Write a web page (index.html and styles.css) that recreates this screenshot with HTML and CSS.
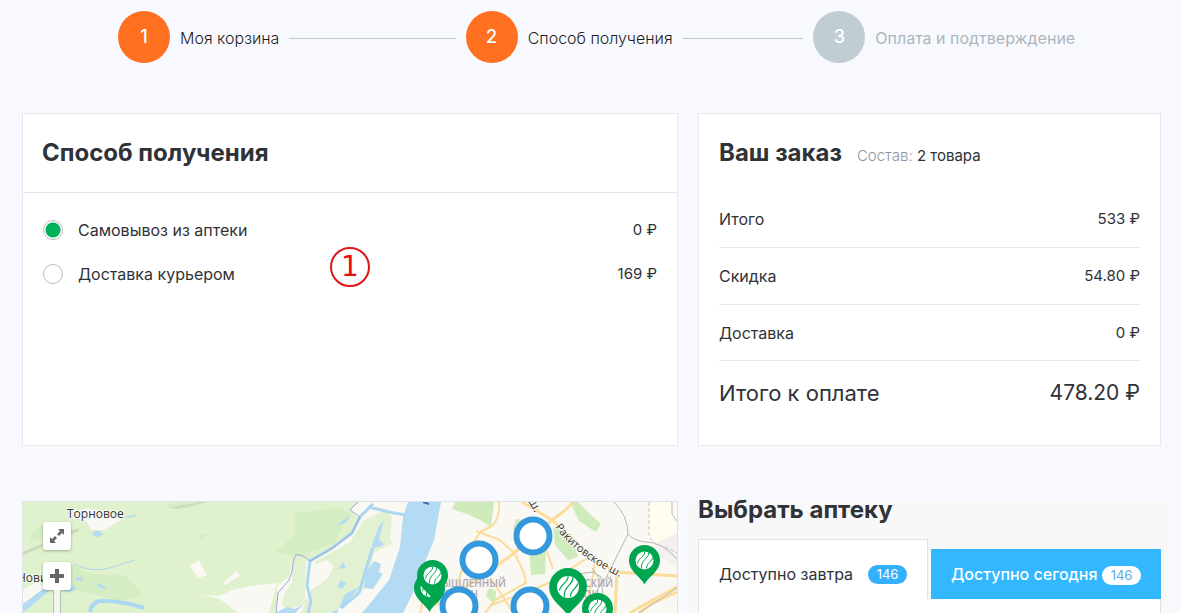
FILE: index.html
```html
<!DOCTYPE html>
<html lang="ru">
<head>
<meta charset="utf-8">
<meta name="viewport" content="width=device-width, initial-scale=1">
<title>Способ получения</title>
<link rel="stylesheet" href="styles.css">
</head>
<body>
<main class="page">
  <ol class="steps">
    <li class="step"><span class="step-num">1</span><span class="step-label">Моя корзина</span><span class="step-line"></span></li>
    <li class="step"><span class="step-num">2</span><span class="step-label">Способ получения</span><span class="step-line"></span></li>
    <li class="step step-next"><span class="step-num">3</span><span class="step-label">Оплата и подтверждение</span></li>
  </ol>

  <div class="columns">
    <section class="card delivery">
      <h2 class="title delivery-title">Способ получения</h2>
      <div class="options">
        <div class="option">
          <input class="radio" type="radio" name="delivery" id="pickup" checked>
          <label class="option-label" for="pickup">Самовывоз из аптеки</label>
          <span class="price">0 ₽</span>
        </div>
        <div class="option">
          <input class="radio" type="radio" name="delivery" id="courier">
          <label class="option-label" for="courier">Доставка курьером</label>
          <span class="price">169 ₽</span>
        </div>
      </div>
      <span class="callout">1</span>
    </section>

    <section class="card order">
      <div class="order-head">
        <h2 class="title">Ваш заказ</h2>
        <p class="order-count"><span class="muted">Состав:</span> 2 товара</p>
      </div>
      <dl class="sums">
        <div class="sum"><dt>Итого</dt><dd class="price">533 ₽</dd></div>
        <div class="sum"><dt>Скидка</dt><dd class="price">54.80 ₽</dd></div>
        <div class="sum"><dt>Доставка</dt><dd class="price">0 ₽</dd></div>
        <div class="sum total"><dt>Итого к оплате</dt><dd class="total-price">478.20 ₽</dd></div>
      </dl>
    </section>
  </div>

  <div class="columns lower">
    <section class="map">
      <svg class="map-canvas" viewBox="23 502 654 111" role="img" aria-label="Карта аптек">
        <defs>
          <g id="leaf">
            <circle r="9" fill="#fff"/>
            <path d="M0-9C1-4-6-3-7 3M4-8C5-2-4-1-3 8M8-3C8 1 2 2 2 8" fill="none" stroke="#00a550" stroke-width="1"/>
          </g>
          <g id="pin">
            <path d="M0 24C-4 16-15.500 11-15.500 0A15.500 15.500 0 0 1 15.500 0C15.500 11 4 16 0 24Z" fill="#00a550"/>
            <use href="#leaf"/>
          </g>
          <path id="rakitovskoe" d="M555 527Q577 558 626 580"/>
        </defs>
        <path fill="#e0f2cd" d="M23 502h654v111H23z"/>
        <g fill="#d5edc2">
          <path d="M295 513l43-5 12 5-15 30-37 13-22-4 18-17zM43 524l-11 9-2 9 22-6zM65 560l25 14 35 1 18 20-24 6-30-8-34-6zM201 535l15-5-18 12zM165 504l42-2-20 7-18-1z"/>
        </g>
        <path fill="#cbd9bc" d="M23 552l55-24 1 3-56 24zM169 508l32-6h7l-31 7z"/>
        <g fill="#faf8f2">
          <path d="M72 513l15-5 28 6 6 6-17 10h-12l-7-10-13-2zM23 590l14-8 12 8-15 10-11 4zM190 566l9-6 8 15-9 3zM224 582l13-11 3 5-9 5-6 4zM202 595l18 1 12-6 18-4 27-3-8 30h-31l-18-14z"/>
          <path d="M292 562l-3 15-12 9 1 8-3 19h402V502H358l-8 8 9 9-8 15-22 18-19 9z"/>
        </g>
        <g fill="#e3f1d3">
          <path d="M293 560l8-3 5 5-1 30 1 11-18 7-6-4 2-12 8-12zM314 562l36-20 13-21 22-11 7 7-2 22 3 4-19 10-8 35-34 25h-31l10-23 16-11 7-13-8-6-10 4z"/>
        </g>
        <g fill="#cfebbb">
          <path d="M455 502h39l-3 25-11-7-13-6-15-5zM570 502h8l12 12 11 10-5 8-17-11zM553 527l18 7 7 23-10 3-13-15zM516 519l14 2-6 22-11-14zM529 551l17-1-1 24-14 1zM489 588l7 3-1 15-9-10z"/>
        </g>
        <path fill="#fefdef" d="M649 502h28v64l-14-8-14-11z"/>
        <path fill="#f4f0f0" d="M651 546l26-13v33l-14-8z"/>
        <g fill="#b3dbf3">
          <path d="M408 502h33l-7 38-11 27-10 26-10 20h-41l11-13 16-20 11-33 3-30z"/>
          <path d="M374 561l7 3-2 8 4 2-10 15-9-1 2-16zM384 520l-5 19 5 6-9 3-3-3 7-19zM341 580l5 3-4 6-5-2zM343 562l3 6-7 1zM345 594l14-7-13 17-15 9h6zM92 534q5-7 11 0-4 6-11 0zM98 583l8 4-1 2-7-2zM62 587q9-4 15 1-3 5-13 3zM75 577h7v4l-7-1zM23 604l20-15 12-4-13 12-19 16zM275 613l12-6 8 2 9-5-9 9zM335 526l16-11-5 8zM124 517l15-3-5 3-10 1z"/>
        </g>
        <g fill="none" stroke="#acd7f0" stroke-width="3">
          <path d="M373 504l-13 13-8 16-20 15-22 13-3 25 4 15-3 13M369 507l20 5 16 3M373 547l-6 19-8 27-18 15"/>
          <path d="M74 564q18 9 35 4l26-8" stroke-width="1"/>
          <path d="M90 612q2-13 18-11 18 1 36 7" stroke-width="4"/>
        </g>
        <path d="M358 502l-8 8 10 7-8 16-19 15-23 13q-7-7-14-6-3 4-4 17l-3 8-11 13-2 20" fill="none" stroke="#9ea7d9" stroke-width="1"/>
        <path d="M423 502l6 2" stroke="#4266ad" stroke-width="2"/>
        <g fill="none" stroke="#fbdc9b" stroke-width="3" stroke-linejoin="round">
          <path d="M522 502l30 18 45 42 20 10 60 4"/>
          <path d="M573 502q-5 7-21 18l-39 34-33 24-45 27"/>
          <path d="M499 502q1 16-7 24l-12 6-15 26-8 29-14 26" stroke-width="2"/>
          <path d="M476 531l24 9 15 14 9 19 2 10-31 17-10 13" stroke-width="2"/>
          <path d="M543 540l10 29M587 558l-38 25-60 23M490 578l14 20 9 15M595 561l-3 20-8 32M440 567l-12 12-8 34" stroke-width="2"/>
          <path d="M617 571l-2 42M677 587l-30 16-17 10M677 592l-26 12-12 9"/>
        </g>
        <g fill="none" stroke="#b8b6b5" stroke-width="1">
          <path d="M614 502q14 14 14 32l-21 42-14 20M628 534q6 7 18 8 16 0 31 17M677 588l-38 25M578 574l15-2 8 5 2 20M592 568l8 12M672 502v12l5 7"/>
          <path d="M649 502v31q1 12 17 14l11 6" stroke="#c9c1df" stroke-dasharray="4 2"/>
        </g>
        <g class="district">
          <text x="506" y="587" text-anchor="end">МЫШЛЕННЫЙ</text>
          <text x="478" y="598" text-anchor="end">РАЙОН</text>
          <text x="613" y="587" text-anchor="end">ВЕТСКИЙ</text>
          <text x="599" y="598" text-anchor="end">РАЙОН</text>
        </g>
        <g class="place">
          <text x="67" y="518">Торновое</text>
          <text x="17" y="582">Нови</text>
          <text><textPath href="#rakitovskoe">Ракитовское ш.</textPath></text>
          <text transform="translate(528 501) rotate(60)">ш.</text>
        </g>
        <use href="#pin" x="429.500" y="588"/>
        <use href="#pin" x="432.500" y="575.500"/>
        <g fill="#fff" stroke="#3398dc" stroke-width="6">
          <circle cx="533" cy="536" r="16.500"/>
          <circle cx="479" cy="560" r="16.500"/>
          <circle cx="459" cy="606" r="16.500"/>
          <circle cx="530" cy="606" r="16.500"/>
        </g>
        <use href="#pin" x="644.500" y="560.500"/>
        <use href="#pin" transform="translate(568 587) scale(1.220)"/>
        <use href="#pin" x="597.500" y="608.500"/>
      </svg>
      <div class="map-controls">
        <button class="map-btn" type="button" aria-label="Развернуть карту">
          <svg width="16" height="16" viewBox="0 0 16 16" fill="#666"><path d="M9 1h6v6l-2-2-3 3-2-2 3-3zM7 15H1V9l2 2 3-3 2 2-3 3z"/></svg>
        </button>
        <button class="map-btn" type="button" aria-label="Приблизить">
          <svg width="16" height="16" viewBox="0 0 16 16" fill="#666"><path d="M6 1h4v5h5v4h-5v5H6v-5H1V6h5z"/></svg>
        </button>
        <span class="zoom-track"></span>
      </div>
    </section>

    <section class="pharmacy">
      <h2 class="title">Выбрать аптеку</h2>
      <div class="tabs" role="tablist">
        <button class="tab tab-open" type="button" role="tab" aria-selected="true">Доступно завтра <span class="badge">146</span></button>
        <button class="tab" type="button" role="tab" aria-selected="false">Доступно сегодня <span class="badge">146</span></button>
      </div>
      <div class="panel" role="tabpanel"></div>
    </section>
  </div>
</main>
</body>
</html>
```
FILE: styles.css
```css
* { box-sizing: border-box; }

body {
  margin: 0;
  background: #f8f9ff;
  color: #2f3237;
  font: 16px/20px Inter, "Open Sans", sans-serif;
}

h2, p, dl, dd, ol { margin: 0; padding: 0; }

button { font: inherit; border: 0; cursor: pointer; }

.page {
  display: flex;
  flex-direction: column;
  height: 100vh;
  overflow: hidden;
  padding: 11px 20px 0 22px;
}

.title {
  font-size: 24px;
  line-height: 28px;
  font-weight: 700;
}

.price { font-size: 15px; }

/* Checkout steps */
.steps {
  display: grid;
  grid-template-columns: repeat(3, 1fr);
  padding-left: 96px;
  margin-bottom: 50px;
  list-style: none;
}

.step {
  display: flex;
  align-items: center;
  gap: 10px;
  padding-right: 10px;
  color: #1c1e22;
  font-weight: 300;
  white-space: nowrap;
}

.step-num {
  flex: none;
  width: 52px;
  height: 52px;
  border-radius: 50%;
  background: #ff7021;
  color: #fff;
  font-size: 18px;
  line-height: 52px;
  font-weight: 500;
  text-align: center;
}

.step-label { padding-top: 1px; }

.step-line {
  flex: 1;
  height: 1px;
  margin-top: 2px;
  background: #becbd1;
}

.step-next { color: #acb6bd; font-weight: 400; }
.step-next .step-num { background: #c0cdd3; }

/* Two-column rows */
.columns {
  display: grid;
  grid-template-columns: 656fr 463fr;
  gap: 20px;
}

.lower {
  flex: 1;
  min-height: 0;
  margin-top: 55px;
}

.card {
  position: relative;
  background: #fff;
  border: 1px solid #e6e8ec;
}

.delivery-title {
  padding: 25px 19px;
  border-bottom: 1px solid #e2e4e8;
}

.options {
  display: grid;
  gap: 24px;
  padding: 27px 20px;
}

.option {
  display: flex;
  align-items: center;
}

.option-label { flex: 1; padding-left: 15px; }

.radio {
  appearance: none;
  width: 20px;
  height: 20px;
  margin: 0;
  border: 1px solid #bdb8bc;
  border-radius: 50%;
  background: #fff;
}

.radio:checked { background: radial-gradient(circle, #00b35a 7px, #fff 8px); }

.callout {
  position: absolute;
  left: 307px;
  top: 133px;
  width: 40px;
  height: 40px;
  border: 2px solid #dd1418;
  border-radius: 50%;
  color: #e60d0d;
  font: 28px/36px "DejaVu Sans", sans-serif;
  text-align: center;
}

/* Order summary */
.order { padding: 25px 20px 20px; }

.order-head {
  display: flex;
  align-items: baseline;
  gap: 15px;
  margin-bottom: 24px;
}

.order-count { font-size: 15px; }

.muted { color: #8e959c; font-weight: 300; }

.sum {
  display: flex;
  justify-content: space-between;
  padding: 18px 0;
  border-bottom: 1px solid #e6e8ec;
}

.sum:nth-child(3) { padding-bottom: 17px; }

.total {
  border-bottom: 0;
  font-size: 22px;
  line-height: 28px;
}

.total-price { font-size: 21px; }

/* Map */
.map {
  position: relative;
  overflow: hidden;
  border: 1px solid #dfe3e8;
  border-bottom: 0;
}

.map-canvas {
  display: block;
  width: 100%;
  height: auto;
}

.place {
  fill: #333;
  stroke: #fff;
  stroke-width: 2px;
  stroke-opacity: 0.7;
  paint-order: stroke;
  font: 12px "Open Sans", sans-serif;
}

.place textPath { font-size: 11px; }

.district {
  fill: #aaa6b3;
  font: 600 10px "Open Sans", sans-serif;
}

.map-controls {
  position: absolute;
  left: 20px;
  top: 20px;
  display: flex;
  flex-direction: column;
  align-items: center;
}

.map-btn {
  display: grid;
  place-items: center;
  width: 28px;
  height: 28px;
  margin-bottom: 12px;
  padding: 0;
  border-radius: 3px;
  background: #fff;
  box-shadow: 0 1px 3px rgba(0, 0, 0, 0.3);
}

.map-btn:nth-child(2) { margin-bottom: 0; }

.zoom-track {
  width: 8px;
  height: 60px;
  border: 1px solid #b7bfb0;
  border-width: 0 1px;
  background: #f2f6ee;
}

/* Pharmacy picker */
.pharmacy {
  display: flex;
  flex-direction: column;
  margin: 0 -10px;
  padding: 0 10px;
  background: #f8f8f8;
}

.pharmacy .title {
  line-height: 18px;
  margin-bottom: 20px;
}

.tabs {
  display: grid;
  grid-template-columns: 1fr 1fr;
  align-items: end;
  gap: 3px;
}

.tab {
  display: flex;
  align-items: center;
  justify-content: space-between;
  height: 50px;
  padding: 0 20px;
  background: #33b8ff;
  color: #fff;
  font-weight: 500;
  white-space: nowrap;
}

.tab-open {
  height: 60px;
  padding-top: 8px;
  border: 1px solid #dfe2e8;
  border-bottom: 0;
  background: #fff;
  color: #2f3237;
  font-weight: 400;
}

.badge {
  width: 39px;
  margin-top: 2px;
  border-radius: 10px;
  background: #fff;
  color: #56aee6;
  font-size: 13px;
  line-height: 19px;
  font-weight: 400;
  text-align: center;
}

.tab-open .badge { background: #33b0fa; color: #fff; }

.panel {
  flex: 1;
  border: 1px solid #dfe2e8;
  border-width: 0 1px;
  background: #fff;
}
```
